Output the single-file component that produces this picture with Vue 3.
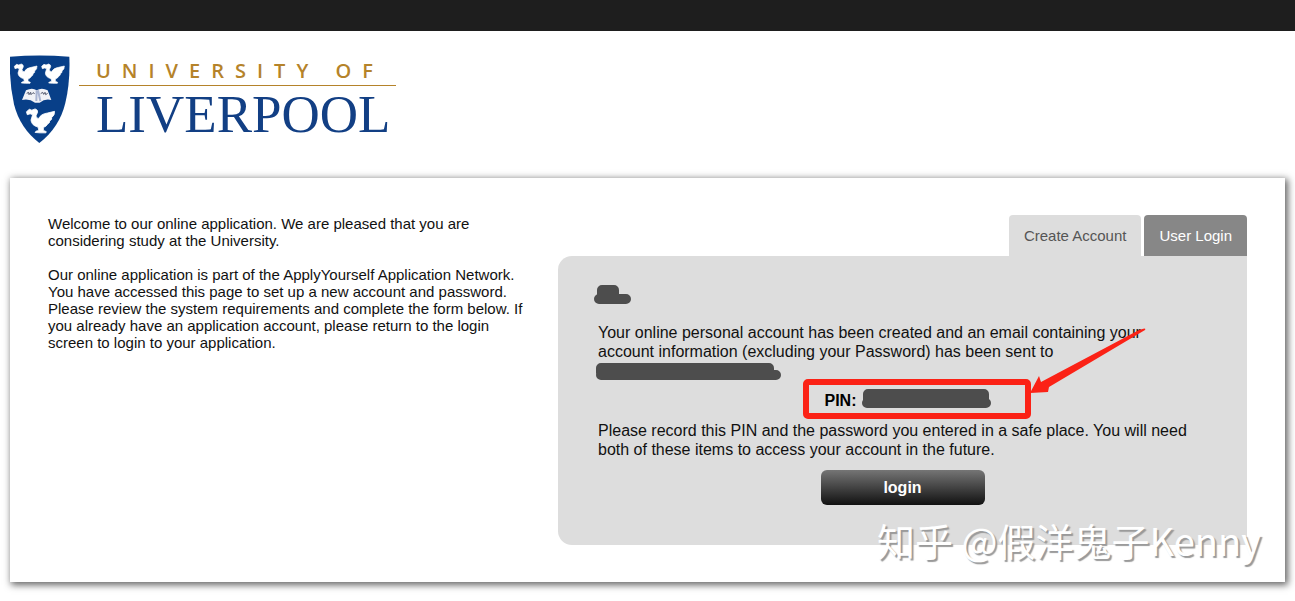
<template>
  <div class="page">
    <div class="top-bar"></div>

    <header class="header">
      <svg class="shield" viewBox="30 30 180 264" role="img" aria-label="University crest">
        <defs>
          <path
            id="liver-bird"
            d="M43 64 L50 58 L56 60 L64 57 Q71 59 70 65 L66 74 Q67 81 73 80 Q78 69 94 67 L111 63 Q112 72 104 78 Q106 83 99 86 Q100 91 95 93 Q91 100 84 102 L84 109 L91 112 L90 115 L76 115 L64 114 L66 111 L73 109 L71 101 Q55 97 54 84 L58 71 L52 69 L45 71 Z"
          />
        </defs>
        <path
          d="M30 35 Q118 28 208 35 Q211 112 196 174 Q178 248 118 294 Q60 250 42 178 Q27 112 30 35 Z"
          fill="#083f88"
        />
        <g fill="#fff" stroke="#fff" stroke-width="2">
          <use href="#liver-bird" />
          <use href="#liver-bird" x="82" />
          <use href="#liver-bird" transform="translate(26 121) scale(1.24)" />
        </g>
        <path
          d="M66 165 L78 136 Q97 127 110 136 Q125 127 143 136 L154 165 Q135 160 119 173 H105 Q88 160 66 165 Z"
          fill="#f1f2f7"
        />
        <path d="M110 136 L109 168 M114 136 L121 168" stroke="#a9b4d2" stroke-width="6" fill="none" />
        <path
          d="M80 145 l6 -3 1 7 5 -7 1 7 6 -6 5 3 M122 146 l6 -4 3 6 4 -6 2 7 6 -4"
          stroke="#50566b"
          stroke-width="3"
          fill="none"
        />
      </svg>
      <div class="wordmark">
        <span class="wordmark-top">UNIVERSITY OF</span>
        <span class="wordmark-name">LIVERPOOL</span>
      </div>
    </header>

    <main class="card">
      <section class="intro">
        <p>
          Welcome to our online application. We are pleased that you are
          considering study at the University.
        </p>
        <p>
          Our online application is part of the ApplyYourself Application Network.
          You have accessed this page to set up a new account and password.
          Please review the system requirements and complete the form below. If
          you already have an application account, please return to the login
          screen to login to your application.
        </p>
      </section>

      <section class="account">
        <nav class="tabs">
          <a
            v-for="tab in tabs"
            :key="tab.id"
            href="#"
            class="tab"
            :class="{ active: tab.id === activeTab }"
            @click.prevent="activeTab = tab.id"
          >{{ tab.label }}</a>
        </nav>

        <div class="panel">
          <svg class="scribble" width="38" height="19">
            <path d="M4 5 H16 V10 H4 Z M1 14 H28" />
          </svg>

          <div class="message">
            <p>
              Your online personal account has been created and an email containing your
              account information (excluding your Password) has been sent to
            </p>
            <svg class="scribble" width="184" height="19">
              <path d="M3 7 H171 V12 H3 Z M3 14 H178" />
            </svg>
          </div>

          <div class="pin">
            <strong>PIN:</strong>
            <svg class="scribble" width="129" height="19">
              <path d="M6 3 H122 V12 H6 Z M5 12 H124" />
            </svg>
            <!-- 标注：红框和箭头 -->
            <svg class="callout" width="350" height="96" viewBox="0 0 350 96">
              <rect x="4" y="56" width="222" height="34" rx="2" />
              <path d="M228 67 L237 50 L239 56 L337 4 Q345 1 343 4 L247 61 L246 66 Z" />
            </svg>
          </div>

          <p>
            Please record this PIN and the password you entered in a safe place. You will need
            both of these items to access your account in the future.
          </p>

          <button type="button" class="login-btn">login</button>
        </div>
      </section>

      <div class="watermark">知乎 @假洋鬼子Kenny</div>
    </main>
  </div>
</template>

<script setup>
import { ref } from 'vue'

const tabs = [
  { id: 'create', label: 'Create Account' },
  { id: 'login', label: 'User Login' }
]

const activeTab = ref('create')
</script>

<style>
body {
  margin: 0;
  background: #fff;
}
</style>

<style scoped>
.page {
  font-family: "Liberation Sans", Arial, sans-serif;
  font-size: 16px;
  color: #111;
}

p {
  margin: 0;
}

.top-bar {
  height: 31px;
  background: #1e1e1e;
}

/* 校徽 */
.header {
  display: flex;
  align-items: flex-start;
  gap: 9px;
  padding: 24px 10px 35px;
}

.shield {
  width: 60px;
  height: 88px;
}

.wordmark {
  display: flex;
  flex-direction: column;
  width: 317px;
}

.wordmark-top {
  padding: 4px 0 2px 17px;
  border-bottom: 1px solid #b5832a;
  font-family: "Open Sans", sans-serif;
  font-size: 20px;
  font-weight: 600;
  line-height: 24px;
  letter-spacing: 11px;
  white-space: nowrap;
  color: #b5832a;
}

.wordmark-name {
  padding-left: 17px;
  font-family: "Liberation Serif", "Times New Roman", serif;
  font-size: 53px;
  line-height: 57px;
  white-space: nowrap;
  color: #123f84;
}

/* 主体 */
.card {
  position: relative;
  display: grid;
  grid-template-columns: 480fr 689fr;
  gap: 30px;
  margin: 0 10px 19px;
  padding: 37px 38px;
  background: #fff;
  box-shadow: 2px 2px 7px 1px #666;
}

.intro {
  display: flex;
  flex-direction: column;
  gap: 17px;
  font-size: 15px;
  line-height: 17px;
}

.tabs {
  display: flex;
  justify-content: flex-end;
  gap: 3px;
}

.tab {
  padding: 0 15px;
  border-radius: 4px 4px 0 0;
  background: #878787;
  color: #fff;
  font-size: 15px;
  line-height: 41px;
  text-decoration: none;
}

.tab.active {
  background: #ddd;
  color: #555;
}

.panel {
  display: flex;
  flex-direction: column;
  gap: 11px;
  padding: 29px 40px 40px;
  border-radius: 14px 0 0 14px;
  background: #ddd;
  line-height: 19px;
}

.message {
  padding: 8px 20px 0 0;
}

.scribble {
  display: block;
  overflow: visible;
  fill: #4d4d4d;
  stroke: #4d4d4d;
  stroke-width: 10px;
  stroke-linecap: round;
  stroke-linejoin: round;
}

.pin {
  position: relative;
  display: flex;
  align-self: center;
  gap: 5px;
  padding-left: 10px;
  color: #000;
}

.callout {
  position: absolute;
  top: -65px;
  left: -13px;
  fill: #fb2216;
  pointer-events: none;
}

.callout rect {
  fill: none;
  stroke: #fb2216;
  stroke-width: 6px;
}

.login-btn {
  align-self: center;
  width: 164px;
  height: 35px;
  padding: 0;
  border: none;
  border-radius: 6px;
  background: linear-gradient(#757575, #111);
  color: #fff;
  font-family: inherit;
  font-size: 16px;
  font-weight: bold;
  cursor: pointer;
}

/* 水印 */
.watermark {
  position: absolute;
  right: 24px;
  bottom: 18px;
  font-family: "Noto Sans CJK SC", sans-serif;
  font-size: 38px;
  line-height: 48px;
  white-space: nowrap;
  color: #fff;
  text-shadow: 2px 2px 1px #999;
  pointer-events: none;
}
</style>
